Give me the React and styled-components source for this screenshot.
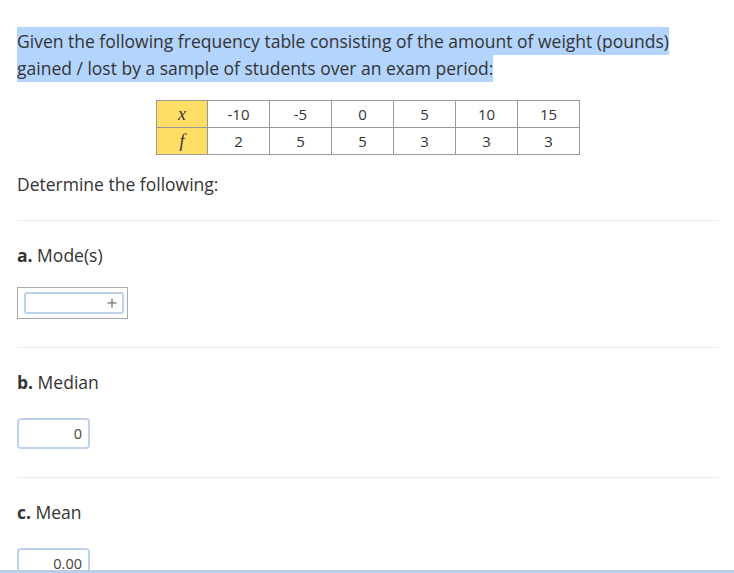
import styled, { createGlobalStyle } from "styled-components";

const GlobalStyle = createGlobalStyle`
    html, body {
        margin: 0;
        padding: 0;
        background: #fff;
    }
    body {
        font-family: "Open Sans", "Liberation Sans", sans-serif;
        color: #333;
    }
`

const Page = styled.div`
    padding: 28px 15px 0 17px;
`

const Prompt = styled.p`
    margin: 0;
    font-size: 17.5px;
    line-height: 27px;
    >span {
        background: #b3d4fc;
        padding: 2px 0;
    }
`

const FreqTable = styled.table`
    margin: 18px auto 0;
    border-collapse: collapse;
    font-size: 15px;
    color: #333;
    td {
        border: 1px solid #999;
        height: 26px;
        padding: 0;
        width: 61px;
        text-align: center;
        line-height: 20px;
    }
`

const VarCell = styled.td`
    && {
        width: 50px;
        background: #ffde66;
        font-family: "Liberation Serif", "Times New Roman", serif;
        font-style: italic;
        font-size: 18px;
    }
`

const Lead = styled.p`
    margin: 17px 0 0;
    font-size: 17.5px;
    line-height: 24px;
    padding-bottom: 24px;
`

const Section = styled.section`
    border-top: 1px solid #ebebeb;
    padding: 22px 0 28px;
`

const Heading = styled.h3`
    margin: 0 0 ${props => props.gap}px;
    font-size: 17.5px;
    font-weight: 400;
    line-height: 24px;
    >b {
        font-weight: 700;
    }
`

const ListBox = styled.div`
    width: 100px;
    height: 22px;
    border: 1px solid #aaa;
    padding: 4px 3px 4px 6px;
`

const ListInput = styled.div`
    box-sizing: border-box;
    height: 22px;
    border: 2px solid #bfd2ec;
    border-radius: 3px;
    display: flex;
    align-items: center;
    justify-content: flex-end;
    padding-right: 5px;
`

const NumInput = styled.div`
    box-sizing: border-box;
    width: 73px;
    height: 31px;
    border: 2px solid #bfd2ec;
    border-radius: 4px;
    display: flex;
    align-items: center;
    justify-content: flex-end;
    padding-right: 6px;
    font-size: 14.5px;
    color: #444;
`

const BottomBar = styled.div`
    position: fixed;
    left: 0;
    right: 0;
    bottom: 0;
    height: 3px;
    background: #b8cde6;
`

const xs = [-10, -5, 0, 5, 10, 15]
const fs = [2, 5, 5, 3, 3, 3]

const PlusIcon = () => (
    <svg width="10" height="10" viewBox="0 0 10 10">
        <path d="M5 0.5v9M0.5 5h9" stroke="#8a8a8a" strokeWidth="1.6" />
    </svg>
)

const App = () => {
    return (
        <Page>
            <GlobalStyle />
            <Prompt>
                <span>Given the following frequency table consisting of the amount of weight (pounds) gained / lost by a sample of students over an exam period:</span>
            </Prompt>
            <FreqTable>
                <tbody>
                    <tr>
                        <VarCell>x</VarCell>
                        {xs.map(v => <td key={v}>{v}</td>)}
                    </tr>
                    <tr>
                        <VarCell>f</VarCell>
                        {fs.map((v, i) => <td key={i}>{v}</td>)}
                    </tr>
                </tbody>
            </FreqTable>
            <Lead>Determine the following:</Lead>
            <Section>
                <Heading gap={20}><b>a.</b> Mode(s)</Heading>
                <ListBox>
                    <ListInput><PlusIcon /></ListInput>
                </ListBox>
            </Section>
            <Section>
                <Heading gap={24}><b>b.</b> Median</Heading>
                <NumInput>0</NumInput>
            </Section>
            <Section>
                <Heading gap={24}><b>c.</b> Mean</Heading>
                <NumInput>0.00</NumInput>
            </Section>
            <BottomBar />
        </Page>
    )
}

export default App
